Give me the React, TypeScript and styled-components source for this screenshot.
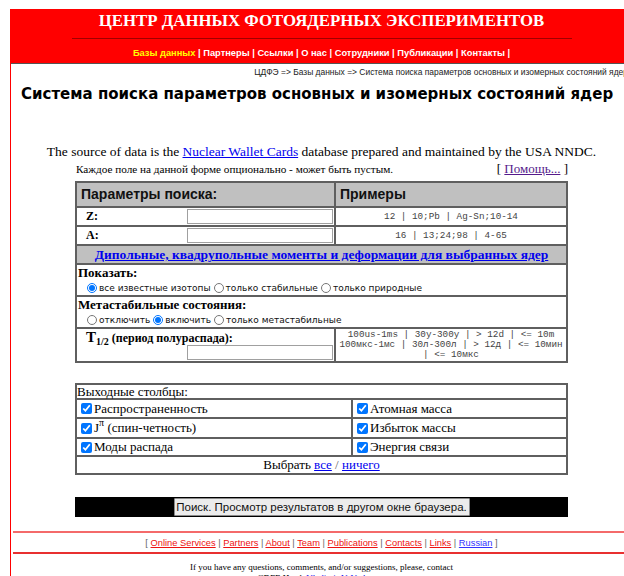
import React from "react";
import styled, { createGlobalStyle } from "styled-components";

const GlobalStyle = createGlobalStyle`
  html { scrollbar-width: none; overflow-x: hidden; }
  body {
    margin: 0;
    padding: 9px 0 0 10px;
    background: #fff;
    color: #000;
    font-family: "Liberation Serif", "Times New Roman", serif;
  }
  * { box-sizing: border-box; }
`;

const Page = styled.div`
  width: 623px;
  min-height: 620px;
  border-left: 1px solid #f00;
  border-right: 1px solid #f00;
`;

const Header = styled.header`
  background: #f00;
  padding-bottom: 3px;
  border-bottom: 1px solid #555;
`;

const Title = styled.div`
  padding-top: 1px;
  color: #fff;
  font-weight: bold;
  font-size: 16.8px;
  line-height: 21px;
  text-align: center;
`;

const Rule = styled.div`
  width: 500px;
  height: 1px;
  margin: 7px auto 0;
  background: #a00000;
`;

const Nav = styled.nav`
  margin-top: 8px;
  font-family: "Liberation Sans", Arial, sans-serif;
  font-weight: bold;
  font-size: 9.3px;
  line-height: 13px;
  text-align: center;
  color: #fff;
`;

const NavLink = styled.a<{ $active?: boolean }>`
  color: ${(p) => (p.$active ? "#ffff00" : "#fff")};
  text-decoration: none;
`;

const Crumbs = styled.div`
  margin-top: 2px;
  padding-right: 4px;
  font-family: "Liberation Sans", Arial, sans-serif;
  font-size: 8.45px;
  line-height: 12px;
  text-align: right;
  white-space: nowrap;
  color: #222;
`;

const Heading = styled.h1`
  margin: 7px 0 0 10px;
  font-family: "DejaVu Sans", Verdana, sans-serif;
  font-weight: bold;
  font-size: 15px;
  line-height: 18px;
  white-space: nowrap;
`;

const Source = styled.p`
  margin: 40px 0 0;
  font-size: 13.5px;
  line-height: 17px;
  text-align: center;
`;

const Link = styled.a<{ $visited?: boolean }>`
  color: ${(p) => (p.$visited ? "#551a8b" : "#0000ee")};
  text-decoration: underline;
`;

const HelpRow = styled.div`
  width: 493px;
  margin: 1px auto 0;
  display: flex;
  justify-content: space-between;
  align-items: baseline;
  line-height: 15px;
`;

const Hint = styled.span`
  padding-left: 1px;
  font-size: 11.2px;
`;

const Help = styled.span`
  font-size: 13px;
`;

const Grid = styled.div<{ $cols: string }>`
  width: 493px;
  margin: 0 auto;
  display: grid;
  grid-template-columns: ${(p) => p.$cols};
  gap: 2px;
  padding: 2px;
  background: #5f5f5f;
`;

const SearchGrid = styled(Grid)`
  margin-top: 4px;
`;

const OutputGrid = styled(Grid)`
  margin-top: 20px;
`;

const HeadCell = styled.div`
  height: 23px;
  padding-left: 4px;
  background: #c0c0c0;
  font-family: "Liberation Sans", Arial, sans-serif;
  font-weight: bold;
  font-size: 14px;
  line-height: 23px;
  color: #111;
`;

const FieldCell = styled.div`
  height: 17px;
  display: flex;
  align-items: center;
  justify-content: space-between;
  padding: 0 1px 0 9px;
  background: #fff;
`;

const FieldLabel = styled.label`
  font-weight: bold;
  font-size: 12px;
`;

const TextBox = styled.input`
  width: 146px;
  height: 15px;
  padding: 0 2px;
  border: 1px solid #a0a0a0;
  background: #fff;
`;

const ExampleCell = styled.div`
  background: #fff;
  font-family: "Liberation Mono", "Courier New", monospace;
  font-size: 9.3px;
  line-height: 10px;
  color: #444;
  text-align: center;
  display: flex;
  flex-direction: column;
  justify-content: center;
`;

const BandCell = styled.div`
  grid-column: 1 / -1;
  height: 17px;
  background: #c0c0c0;
  text-align: center;
  font-weight: bold;
  font-size: 13.5px;
  line-height: 17px;
`;

const OptionCell = styled.div<{ $h: number }>`
  grid-column: 1 / -1;
  height: ${(p) => p.$h}px;
  padding-left: 1px;
  background: #fff;
`;

const OptionTitle = styled.div`
  font-weight: bold;
  font-size: 13px;
  line-height: 15px;
`;

const OptionLine = styled.div`
  display: flex;
  align-items: center;
  height: 15px;
  padding-left: 6px;
  font-family: "DejaVu Sans", Verdana, sans-serif;
  font-size: 9px;
  color: #111;
`;

const Radio = styled.input`
  width: 10px;
  height: 10px;
  margin: 0 2px 0 3px;
`;

const HalfLifeCell = styled.div`
  height: 32px;
  display: flex;
  flex-direction: column;
  justify-content: space-between;
  padding: 1px 1px 1px 9px;
  background: #fff;
  & > input {
    align-self: flex-end;
  }
`;

const HalfLifeLabel = styled.div`
  font-weight: bold;
  font-size: 12px;
  line-height: 14px;
  & > b {
    font-size: 15px;
  }
  & > sub {
    font-size: 10px;
    vertical-align: -3px;
    line-height: 0;
  }
`;

const TopCell = styled.div`
  grid-column: 1 / -1;
  height: 13px;
  background: #fff;
  font-size: 13px;
  line-height: 13px;
`;

const CheckCell = styled.label<{ $h: number }>`
  height: ${(p) => p.$h}px;
  display: flex;
  align-items: center;
  background: #fff;
  font-size: 13px;
  white-space: pre;
`;

const Check = styled.input`
  width: 11px;
  height: 11px;
  margin: 0 2px 0 4px;
`;

const Sup = styled.span`
  font-size: 10px;
  line-height: 0;
  position: relative;
  top: -5px;
`;

const PickCell = styled.div`
  grid-column: 1 / -1;
  height: 16px;
  background: #fff;
  text-align: center;
  font-size: 13px;
  line-height: 16px;
`;

const Slash = styled.span`
  color: #666;
`;

const SubmitBar = styled.div`
  width: 493px;
  height: 20px;
  margin: 22px auto 0;
  display: flex;
  align-items: center;
  justify-content: center;
  background: #000;
`;

const SubmitButton = styled.button`
  height: 18px;
  width: 296px;
  padding: 0;
  border: 1px solid #8a8a8a;
  border-radius: 1px;
  background: #ececec;
  color: #111;
  font-family: "Liberation Sans", Arial, sans-serif;
  font-size: 11.5px;
`;

const FooterLine = styled.div<{ $color: string; $gap: number }>`
  height: 2px;
  margin: ${(p) => p.$gap}px 8px 0 2px;
  background: ${(p) => p.$color};
`;

const FooterNav = styled.div`
  margin-top: 4px;
  font-family: "Liberation Sans", Arial, sans-serif;
  font-size: 9.3px;
  line-height: 12px;
  text-align: center;
  color: #666;
`;

const FooterLink = styled.a<{ $blue?: boolean }>`
  color: ${(p) => (p.$blue ? "#3333ff" : "#ee1111")};
  text-decoration: underline;
`;

const Contact = styled.div`
  margin-top: 8px;
  font-size: 9px;
  line-height: 11px;
  text-align: center;
`;

const navItems = ["Партнеры", "Ссылки", "О нас", "Сотрудники", "Публикации", "Контакты"];
const footerItems = ["Online Services", "Partners", "About", "Team", "Publications", "Contacts", "Links"];

const showOptions = [
  { label: "все известные изотопы", checked: true },
  { label: "только стабильные", checked: false },
  { label: "только природные", checked: false },
];

const metaOptions = [
  { label: "отключить", checked: false },
  { label: "включить", checked: true },
  { label: "только метастабильные", checked: false },
];

const outputRows: [React.ReactNode, string, number][] = [
  ["Распространенность", "Атомная масса", 17],
  [<>J<Sup>π</Sup> (спин-четность)</>, "Избыток массы", 18],
  ["Моды распада", "Энергия связи", 16],
];

export default function App() {
  return (
    <>
      <GlobalStyle />
      <Page>
        <Header>
          <Title>ЦЕНТР ДАННЫХ ФОТОЯДЕРНЫХ ЭКСПЕРИМЕНТОВ</Title>
          <Rule />
          <Nav>
            <NavLink $active href="#">Базы данных</NavLink>
            {navItems.map((item) => (
              <React.Fragment key={item}>
                {" | "}
                <NavLink href="#">{item}</NavLink>
              </React.Fragment>
            ))}
            {" |"}
          </Nav>
        </Header>

        <Crumbs>ЦДФЭ =&gt; Базы данных =&gt; Система поиска параметров основных и изомерных состояний ядер</Crumbs>

        <Heading>Система поиска параметров основных и изомерных состояний ядер</Heading>

        <Source>
          The source of data is the <Link href="#">Nuclear Wallet Cards</Link> database prepared and maintained by the USA NNDC.
        </Source>

        <HelpRow>
          <Hint>Каждое поле на данной форме опционально - может быть пустым.</Hint>
          <Help>
            [ <Link $visited href="#">Помощь...</Link> ]
          </Help>
        </HelpRow>

        <SearchGrid $cols="257px 230px">
          <HeadCell>Параметры поиска:</HeadCell>
          <HeadCell>Примеры</HeadCell>

          <FieldCell>
            <FieldLabel>Z:</FieldLabel>
            <TextBox name="z" />
          </FieldCell>
          <ExampleCell>12 | 10;Pb | Ag-Sn;10-14</ExampleCell>

          <FieldCell>
            <FieldLabel>A:</FieldLabel>
            <TextBox name="a" />
          </FieldCell>
          <ExampleCell>16 | 13;24;98 | 4-65</ExampleCell>

          <BandCell>
            <Link href="#">Дипольные, квадрупольные моменты и деформации для выбранных ядер</Link>
          </BandCell>

          <OptionCell $h={30}>
            <OptionTitle>Показать:</OptionTitle>
            <OptionLine>
              {showOptions.map((o) => (
                <React.Fragment key={o.label}>
                  <Radio type="radio" name="show" defaultChecked={o.checked} />
                  {o.label}
                </React.Fragment>
              ))}
            </OptionLine>
          </OptionCell>

          <OptionCell $h={30}>
            <OptionTitle>Метастабильные состояния:</OptionTitle>
            <OptionLine>
              {metaOptions.map((o) => (
                <React.Fragment key={o.label}>
                  <Radio type="radio" name="meta" defaultChecked={o.checked} />
                  {o.label}
                </React.Fragment>
              ))}
            </OptionLine>
          </OptionCell>

          <HalfLifeCell>
            <HalfLifeLabel>
              <b>T</b>
              <sub>1/2</sub> (период полураспада):
            </HalfLifeLabel>
            <TextBox name="t12" />
          </HalfLifeCell>
          <ExampleCell>
            <div>100us-1ms | 30y-300y | &gt; 12d | &lt;= 10m</div>
            <div>100мкс-1мс | 30л-300л | &gt; 12д | &lt;= 10мин</div>
            <div>| &lt;= 10мкс</div>
          </ExampleCell>
        </SearchGrid>

        <OutputGrid $cols="274px 213px">
          <TopCell>Выходные столбцы:</TopCell>
          {outputRows.map(([left, right, h]) => (
            <React.Fragment key={right}>
              <CheckCell $h={h}>
                <Check type="checkbox" defaultChecked />
                {left}
              </CheckCell>
              <CheckCell $h={h}>
                <Check type="checkbox" defaultChecked />
                {right}
              </CheckCell>
            </React.Fragment>
          ))}
          <PickCell>
            Выбрать <Link href="#">все</Link> <Slash>/</Slash> <Link href="#">ничего</Link>
          </PickCell>
        </OutputGrid>

        <SubmitBar>
          <SubmitButton type="button">Поиск. Просмотр результатов в другом окне браузера.</SubmitButton>
        </SubmitBar>

        <FooterLine $color="#f46a6a" $gap={14} />
        <FooterNav>
          [{" "}
          {footerItems.map((item) => (
            <React.Fragment key={item}>
              <FooterLink href="#">{item}</FooterLink>
              {" | "}
            </React.Fragment>
          ))}
          <FooterLink $blue href="#">Russian</FooterLink> ]
        </FooterNav>
        <FooterLine $color="#e83030" $gap={3} />

        <Contact>
          If you have any questions, comments, and/or suggestions, please, contact
          <br />
          CDFE Head: <Link href="#">Vladimir V. Varlamov</Link>
        </Contact>
      </Page>
    </>
  );
}
